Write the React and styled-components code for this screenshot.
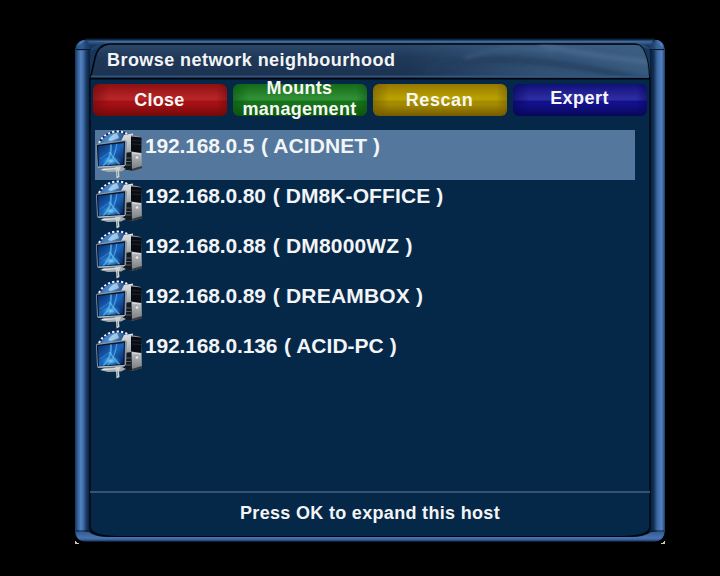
import React from 'react';
import styled, { createGlobalStyle } from 'styled-components';

const Global = createGlobalStyle`
  * { box-sizing: border-box; }
  html, body { margin: 0; background: #000; }
  body { font-family: "Liberation Sans", Arial, sans-serif; font-weight: bold; color: #f2f4f6; overflow: hidden; }
`;

const Screen = styled.main`
  width: 720px;
  height: 576px;
  padding: 38px 55px 32px 75px;
  background: #000;
`;

const Window = styled.section`
  position: relative;
  isolation: isolate;
  width: 590px;
  height: 506px;
  display: flex;
  flex-direction: column;
  padding: 6px 15px 7px;
`;

const Artwork = styled.svg`
  position: absolute;
  inset: 0;
  z-index: -1;
  display: block;
`;

const Header = styled.header`
  height: 36px;
  padding-left: 17px;
  display: flex;
  align-items: center;
`;

const Title = styled.h1`
  margin: 0;
  padding-bottom: 3px;
  font-size: 18px;
  line-height: 21px;
  letter-spacing: 0.44px;
  white-space: nowrap;
`;

const Toolbar = styled.nav`
  margin-top: 4px;
  padding: 0 3px;
  height: 32px;
  display: grid;
  grid-template-columns: repeat(4, 134px);
  column-gap: 6px;
`;

const ColorButton = styled.button`
  height: 32px;
  min-width: 0;
  padding: 0 1px 0 0;
  border: 0;
  border-radius: 6px;
  display: flex;
  align-items: center;
  justify-content: center;
  font: bold 18px/21px "Liberation Sans", Arial, sans-serif;
  letter-spacing: ${p => p.$spacing}px;
  color: #f7f7f5;
  text-align: center;
  background:
    linear-gradient(90deg, ${p => p.$edge}99, transparent 12%, transparent 92%, ${p => p.$edge}88),
    linear-gradient(${p => p.$dark}, ${p => p.$light} 42%, ${p => p.$light} 50%, ${p => p.$mid} 54%, ${p => p.$mid} 64%, ${p => p.$edge});
`;

const Label = styled.span`
  white-space: pre-line;
  flex: none;
  padding-bottom: ${p => p.$lift || 0}px;
`;

const List = styled.ul`
  list-style: none;
  margin: 14px 15px 0 5px;
  padding: 0;
  flex: 1;
`;

const Row = styled.li`
  height: 50px;
  display: flex;
  background: ${p => (p.$selected ? '#53779d' : 'transparent')};
`;

const HostLine = styled.span`
  padding: 4px 0 0 2px;
  font-size: 21px;
  line-height: 24px;
  white-space: pre;
`;

const Address = styled.span`
  margin-right: 1px;
  letter-spacing: -0.16px;
`;

const HostName = styled.span`
  letter-spacing: ${p => p.$spacing}px;
`;

const Footer = styled.footer`
  height: 46px;
  border-top: 2px solid #38536d;
  padding-top: 10px;
  text-align: center;
  font-size: 18px;
  line-height: 21px;
  letter-spacing: 0.32px;
`;

const ComputerIcon = styled.svg`
  width: 48px;
  height: 50px;
  flex: none;
`;

function IconDefs() {
  return (
    <defs>
      <linearGradient id="glass" x1="0" y1="0" x2="1" y2="1">
        <stop offset="0" stopColor="#082a66" />
        <stop offset=".5" stopColor="#1a66bd" />
        <stop offset="1" stopColor="#05194d" />
      </linearGradient>
      <linearGradient id="globe" x1="0" y1="0" x2="1" y2=".2">
        <stop offset="0" stopColor="#2a5ea6" />
        <stop offset=".5" stopColor="#5294d2" />
        <stop offset="1" stopColor="#1a3668" />
      </linearGradient>
      <linearGradient id="tower" x1="0" y1="0" x2="0" y2="1">
        <stop offset="0" stopColor="#8e9498" />
        <stop offset=".4" stopColor="#c4c8ca" />
        <stop offset="1" stopColor="#74797d" />
      </linearGradient>
      <linearGradient id="towerSide" x1="0" y1="0" x2="0" y2="1">
        <stop offset="0" stopColor="#e0e3e4" />
        <stop offset=".45" stopColor="#a3abaf" />
        <stop offset="1" stopColor="#2d353b" />
      </linearGradient>
      <radialGradient id="flare">
        <stop offset="0" stopColor="#b5edff" stopOpacity=".9" />
        <stop offset=".4" stopColor="#43abec" stopOpacity=".65" />
        <stop offset="1" stopColor="#1769c5" stopOpacity="0" />
      </radialGradient>
      <filter id="glow" x="-20%" y="-20%" width="140%" height="140%"><feGaussianBlur stdDeviation=".6" /></filter>
      <clipPath id="screenClip"><path d="M3 16L29 13 28 34 4 36Z" /></clipPath>
    </defs>
  );
}

function Computer() {
  return (
    <ComputerIcon viewBox="0 0 48 50" aria-hidden="true">
      <IconDefs />
      <path d="M3 15Q8 2 21 1Q30 1 35 6L32 17Z" fill="url(#globe)" />
      <path d="M4 13Q9 3 20 1.7Q28 1 33 4.5" fill="none" stroke="#0d2863" strokeWidth="2" />
      <path d="M4 13Q9 3 20 1.7Q28 1 33 4.5" fill="none" stroke="#f2f7fb" strokeWidth="2" strokeDasharray="2.2 2.2" />
      <path d="M13 10Q17 4 22 3L24 8 16 11Z" fill="#c4e2f5" opacity=".7" />
      <path d="M26 11L29 5 38 3.5 37 41 29 39Z" fill="url(#towerSide)" />
      <path d="M29 23L37 22 37 40 29 40Z" fill="#121920" />
      <path d="M31 28H36M31 31.5H36M31 35H36" stroke="#60686d" strokeWidth=".9" />
      <path d="M36 5L46 7 47 38 37 41Z" fill="url(#tower)" />
      <path d="M36 6.5L46.5 7.5 46.5 23 36 21.5Z" fill="#080b12" />
      <path d="M37 10.5L46 11M37 14L46 14.5" stroke="#242c36" strokeWidth=".8" />
      <path d="M37 23L46 24" stroke="#e5e9ea" strokeWidth=".8" />
      <circle cx="42" cy="27.5" r="1.7" fill="#e8ebec" stroke="#90979a" strokeWidth=".6" />
      <path d="M37 40L47 37" stroke="#353b40" strokeWidth="2" />
      <path d="M1 15.2Q1 14 3 13.6L29 10.2Q32 10 32 12L31 35 28 37 4 38Q2 38 2 36Z" fill="#8796a5" />
      <path d="M1.8 15L30 11.3 29.5 35.5 3 37Z" fill="#07132a" />
      <path d="M3 16L29 13 28 34 4 36Z" fill="url(#glass)" />
      <g clipPath="url(#screenClip)">
        <ellipse cx="16" cy="31" rx="11" ry="6" fill="url(#flare)" />
        <g filter="url(#glow)" fill="none" stroke="#61bdf0">
          <path d="M8 36Q17 28 16 13" strokeWidth="2" opacity=".65" />
          <path d="M12 36Q20 29 22 13" strokeWidth="1.2" opacity=".65" />
          <path d="M15 22Q18 28 25 35" strokeWidth="1.6" opacity=".75" />
          <path d="M5 29Q11 25 15 22" strokeWidth="1" opacity=".4" />
        </g>
      </g>
      <path d="M3 37L30 35.5" stroke="#bac5cb" strokeWidth="1" />
      <path d="M5 40L9 38 27 37 31 39 26 41.5 13 42Z" fill="#a3abae" />
      <path d="M7 39.7L25 38.3" stroke="#e7ebec" strokeWidth="1" />
      <path d="M20 37L26 36.5 24 41 24.5 47 21.5 48.5 21 41Z" fill="#ccd0d0" />
      <path d="M22.5 41V46" stroke="#777f82" strokeWidth=".7" />
    </ComputerIcon>
  );
}

function WindowArtwork() {
  return (
    <Artwork width="590" height="506" viewBox="0 0 590 506" aria-hidden="true">
      <defs>
        <linearGradient id="railLeft">
          <stop offset="0" stopColor="#16365f" />
          <stop offset=".2" stopColor="#366097" />
          <stop offset=".38" stopColor="#5282c2" />
          <stop offset=".55" stopColor="#426da8" />
          <stop offset=".75" stopColor="#183b65" />
          <stop offset="1" stopColor="#061c35" />
        </linearGradient>
        <linearGradient id="railRight">
          <stop offset="0" stopColor="#071c36" />
          <stop offset=".25" stopColor="#122f55" />
          <stop offset=".48" stopColor="#3c689f" />
          <stop offset=".78" stopColor="#5282c2" />
          <stop offset="1" stopColor="#1b3d68" />
        </linearGradient>
        <linearGradient id="topEdge" x1="0" y1="0" x2="0" y2="1">
          <stop offset="0" stopColor="#00040d" />
          <stop offset=".25" stopColor="#102a4b" />
          <stop offset=".5" stopColor="#456b9b" />
          <stop offset=".75" stopColor="#355a87" />
          <stop offset="1" stopColor="#071426" />
        </linearGradient>
        <linearGradient id="bottomEdge" x1="0" y1="494" x2="0" y2="506" gradientUnits="userSpaceOnUse">
          <stop offset="0" stopColor="#345c91" />
          <stop offset=".5" stopColor="#4874b2" />
          <stop offset=".68" stopColor="#33598e" />
          <stop offset=".8" stopColor="#0b1b31" />
          <stop offset="1" stopColor="#000" />
        </linearGradient>
        <linearGradient id="caption" x1="0" y1="0" x2="0" y2="1">
          <stop offset="0" stopColor="#2b486b" />
          <stop offset=".4" stopColor="#203858" />
          <stop offset="1" stopColor="#1b3150" />
        </linearGradient>
        <linearGradient id="sheen">
          <stop offset="0" stopColor="#4a7297" stopOpacity="0" />
          <stop offset=".55" stopColor="#466d94" stopOpacity=".5" />
          <stop offset="1" stopColor="#42688d" stopOpacity=".75" />
        </linearGradient>
        <filter id="soft"><feGaussianBlur stdDeviation="2" /></filter>
        <clipPath id="captionClip"><path d="M15.5 40L20 20Q23 7 34 6H559Q566 6 569 13Q574 24 574 40Z" /></clipPath>
      </defs>
      <path d="M0 12Q1 3 12 0H578Q589 3 590 12V496Q588 503 576 504H14Q2 503 0 496Z" fill="#040f20" />
      <path d="M0 12Q1 4 8 2H15V503H9Q0 502 0 493Z" fill="url(#railLeft)" />
      <path d="M575 2H583Q589 4 590 12V493Q589 502 580 503H575Z" fill="url(#railRight)" />
      <path d="M10 0H580L575 7H15Z" fill="url(#topEdge)" />
      <path d="M15 11L23 6H34Q24 7 20 20L15 40Z" fill="#17365c" />
      <path d="M575 11L568 6H559Q566 6 569 13Q573 22 575 40Z" fill="#17365c" />
      <path d="M1 13Q3 4 14 3Q20 4 31 4L25 8Q17 14 14 12Z" fill="#244a7a" opacity=".65" />
      <path d="M589 12Q585 4 575 3L558 4L570 10Q579 14 589 12Z" fill="#315b8e" opacity=".55" />
      <path d="M1 11.5H16M574 11.5H589M1 493H16M574 493H589" stroke="#081a33" strokeWidth="1.2" />
      <path d="M14 494Q20 499 33 499H557Q569 499 576 494L589 494Q589 502 580 504H10Q1 502 1 494Z" fill="url(#bottomEdge)" />
      <path d="M15 40H575V489Q574 498 548 498.5H42Q16 498 15 489Z" fill="#052748" stroke="#01040c" strokeWidth="1.2" />
      <path d="M15.5 40L20 20Q23 7 34 6H559Q566 6 569 13Q574 24 574 40Z" fill="url(#caption)" stroke="#02060b" strokeWidth="1.6" />
      <g clipPath="url(#captionClip)">
        <path d="M330 7H575V40H330Z" fill="url(#sheen)" />
        <g filter="url(#soft)" fill="none">
          <path d="M350 32Q430 7 575 44" stroke="#213c5d" strokeWidth="7" opacity=".75" />
          <path d="M465 6Q500 16 575 24" stroke="#7896b5" strokeWidth="4" opacity=".3" />
          <path d="M390 20Q430 4 480 14" stroke="#7190b1" strokeWidth="3" opacity=".2" />
        </g>
        <path d="M15 38.5H575" stroke="#31557f" strokeWidth="2" />
      </g>
      <path d="M15 40.7H575" stroke="#01050b" strokeWidth="1.5" />
      <path d="M0 503h1v1h1v1h2v1H0zM590 503h-1v1h-1v1h-2v1h4z" fill="#c5c8c8" />
    </Artwork>
  );
}

const actions = [
  { text: 'Close', edge: '#720909', dark: '#8e1012', mid: '#a51014', light: '#b52426', spacing: 0.25 },
  { text: 'Mounts\nmanagement', edge: '#0b560e', dark: '#146b18', mid: '#15731a', light: '#308e34', spacing: 0.3, lift: 2 },
  { text: 'Rescan', edge: '#735b00', dark: '#967700', mid: '#a58a00', light: '#b7a000', spacing: 0.6 },
  { text: 'Expert', edge: '#080759', dark: '#10107a', mid: '#12108a', light: '#2c2b9f', spacing: 0.45, lift: 4 },
];

const hosts = [
  { address: '192.168.0.5', name: 'ACIDNET', spacing: 0.08 },
  { address: '192.168.0.80', name: 'DM8K-OFFICE', spacing: 0.1 },
  { address: '192.168.0.88', name: 'DM8000WZ', spacing: 0.18 },
  { address: '192.168.0.89', name: 'DREAMBOX', spacing: 0.2 },
  { address: '192.168.0.136', name: 'ACID-PC', spacing: 0.02 },
];

export default function App() {
  return (
    <>
      <Global />
      <Screen>
        <Window>
          <WindowArtwork />
          <Header><Title>Browse network neighbourhood</Title></Header>
          <Toolbar>
            {actions.map(a => (
              <ColorButton key={a.text} $edge={a.edge} $dark={a.dark} $mid={a.mid} $light={a.light} $spacing={a.spacing}>
                <Label $lift={a.lift}>{a.text}</Label>
              </ColorButton>
            ))}
          </Toolbar>
          <List>
            {hosts.map((h, i) => (
              <Row key={h.address} $selected={i === 0}>
                <Computer />
                <HostLine>
                  <Address>{h.address}</Address>
                  <HostName $spacing={h.spacing}>{` ( ${h.name} )`}</HostName>
                </HostLine>
              </Row>
            ))}
          </List>
          <Footer>Press OK to expand this host</Footer>
        </Window>
      </Screen>
    </>
  );
}
